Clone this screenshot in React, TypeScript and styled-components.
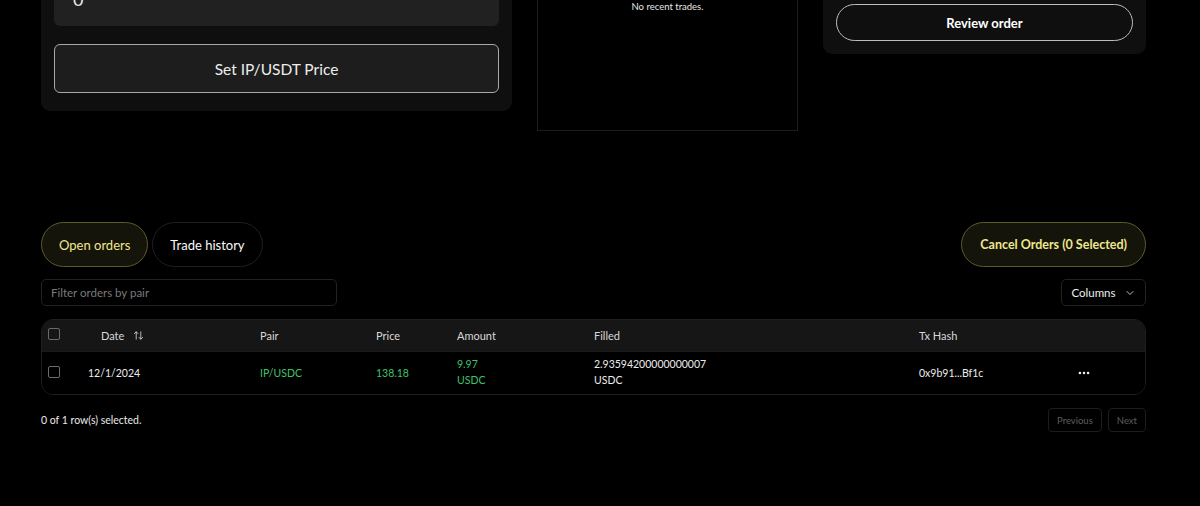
import React from 'react'
import styled, { createGlobalStyle } from 'styled-components'
import { ArrowUpDown, ChevronDown, Ellipsis } from 'lucide-react'

const GlobalStyle = createGlobalStyle`
  html, body {
    margin: 0;
    padding: 0;
    background: #000;
    overflow: hidden;
  }
  body {
    font-family: Lato, "Open Sans", sans-serif;
    color: #f2f2f2;
  }
  * { box-sizing: border-box; }
`

const Page = styled.div`
  width: 1200px;
  height: 506px;
  padding: 0 54px 0 41px;
  overflow: hidden;
`

const TopRow = styled.div`
  display: grid;
  grid-template-columns: 471px 261px 323px;
  column-gap: 25px;
  align-items: start;
  margin-top: -40px;
`

const Card = styled.div<{ $padBottom?: number; $padTop?: number }>`
  background: #0f0f0f;
  border-radius: 9px;
  padding: ${p => p.$padTop ?? 13}px 13px ${p => p.$padBottom ?? 13}px;
  display: flex;
  flex-direction: column;
  gap: 18px;
`

const PriceInput = styled.div`
  height: 53px;
  background: #212121;
  border-radius: 6px;
  padding: 0 19px 16px;
  display: flex;
  align-items: flex-end;
  font-size: 18px;
  color: #e8e8e8;
`

const SetButton = styled.button`
  height: 49px;
  background: #1d1d1d;
  border: 1px solid #a9a9a9;
  border-radius: 6px;
  color: #ededed;
  font-family: inherit;
  font-size: 15.5px;
`

const TradesBox = styled.div`
  height: 171px;
  border: 1px solid #1c1c1c;
  padding-top: 40px;
  text-align: center;
  font-size: 9.5px;
  color: #e6e6e6;
`

const ReviewButton = styled.button`
  height: 37px;
  border-radius: 19px;
  background: #0f0f0f;
  border: 1px solid #bdbdbd;
  color: #fff;
  font-family: inherit;
  font-weight: 700;
  font-size: 13px;
`

const Toolbar = styled.div<{ $top: number; $height: number }>`
  display: flex;
  align-items: center;
  justify-content: space-between;
  margin-top: ${p => p.$top}px;
  height: ${p => p.$height}px;
`

const TabGroup = styled.div`
  display: flex;
  gap: 4px;
  height: 100%;
`

const Pill = styled.button<{ $active?: boolean; $bold?: boolean }>`
  height: 45px;
  padding: 0 ${p => (p.$bold ? 18 : 17)}px;
  border-radius: 23px;
  font-family: inherit;
  font-size: ${p => (p.$bold ? 12.5 : 13)}px;
  font-weight: ${p => (p.$bold ? 700 : 400)};
  background: ${p => (p.$active ? '#15140b' : '#000')};
  border: 1px solid ${p => (p.$active ? '#5d5a2c' : '#1f1f1f')};
  color: ${p => (p.$active ? '#efe78c' : '#fafafa')};
`

const FilterInput = styled.input`
  width: 296px;
  height: 27px;
  background: #000;
  border: 1px solid #222;
  border-radius: 5px;
  padding: 0 9px;
  font-family: inherit;
  font-size: 11.5px;
  color: #ddd;
  &::placeholder { color: #7a7a7a; }
`

const ColumnsButton = styled.button`
  width: 85px;
  height: 27px;
  background: #000;
  border: 1px solid #222;
  border-radius: 5px;
  color: #eee;
  font-family: inherit;
  font-size: 11.5px;
  display: flex;
  align-items: center;
  justify-content: center;
  gap: 8px;
`

const Table = styled.div`
  margin-top: 13px;
  border: 1px solid #1f1f1f;
  border-radius: 12px;
  overflow: hidden;
`

const Row = styled.div<{ $head?: boolean }>`
  display: grid;
  grid-template-columns: 46px 172px 116px 81px 137px 325px 149px 1fr;
  align-items: center;
  height: ${p => (p.$head ? 31 : 43)}px;
  background: ${p => (p.$head ? '#161616' : '#000')};
  border-top: ${p => (p.$head ? 'none' : '1px solid #1a1a1a')};
  font-size: 10.5px;
`

const Cell = styled.div<{ $green?: boolean; $pad?: number }>`
  color: ${p => (p.$green ? '#3fc26c' : '#ececec')};
  line-height: 16px;
  padding-left: ${p => p.$pad ?? 0}px;
  display: flex;
  align-items: center;
  gap: 9px;
`

const HeadCell = styled(Cell)`
  color: #d8d8d8;
  font-size: 11px;
`

const Check = styled.span`
  width: 12px;
  height: 12px;
  border: 1px solid #6a6a6a;
  border-radius: 2px;
  margin-left: 6px;
  margin-top: -3px;
`

const Stack = styled.div`
  display: flex;
  flex-direction: column;
  margin-top: -2px;
`

const Footer = styled.div`
  margin-top: 13px;
  display: flex;
  align-items: center;
  justify-content: space-between;
  font-size: 10.5px;
  color: #eaeaea;
`

const PagerGroup = styled.div`
  display: flex;
  gap: 6px;
`

const PagerButton = styled.button`
  height: 24px;
  padding: 0 8px;
  background: #000;
  border: 1px solid #1c1c1c;
  border-radius: 4px;
  color: #5e5e5e;
  font-family: inherit;
  font-size: 9.5px;
`

export default function App() {
  return (
    <>
      <GlobalStyle />
      <Page>
        <TopRow>
          <Card $padBottom={18}>
            <PriceInput>0</PriceInput>
            <SetButton>Set IP/USDT Price</SetButton>
          </Card>
          <TradesBox>No recent trades.</TradesBox>
          <Card $padTop={44}>
            <ReviewButton>Review order</ReviewButton>
          </Card>
        </TopRow>

        <Toolbar $top={91} $height={45}>
          <TabGroup>
            <Pill $active>Open orders</Pill>
            <Pill>Trade history</Pill>
          </TabGroup>
          <Pill $active $bold>Cancel Orders (0 Selected)</Pill>
        </Toolbar>

        <Toolbar $top={12} $height={27}>
          <FilterInput placeholder="Filter orders by pair" />
          <ColumnsButton>
            Columns <ChevronDown size={12} strokeWidth={1.6} />
          </ColumnsButton>
        </Toolbar>

        <Table>
          <Row $head>
            <HeadCell><Check /></HeadCell>
            <HeadCell $pad={13}>Date <ArrowUpDown size={11} strokeWidth={1.8} /></HeadCell>
            <HeadCell>Pair</HeadCell>
            <HeadCell>Price</HeadCell>
            <HeadCell>Amount</HeadCell>
            <HeadCell>Filled</HeadCell>
            <HeadCell>Tx Hash</HeadCell>
            <HeadCell />
          </Row>
          <Row>
            <Cell><Check /></Cell>
            <Cell>12/1/2024</Cell>
            <Cell $green>IP/USDC</Cell>
            <Cell $green>138.18</Cell>
            <Cell $green>
              <Stack><span>9.97</span><span>USDC</span></Stack>
            </Cell>
            <Cell>
              <Stack><span>2.93594200000000007</span><span>USDC</span></Stack>
            </Cell>
            <Cell>0x9b91...Bf1c</Cell>
            <Cell $pad={9}><Ellipsis size={14} strokeWidth={2.4} /></Cell>
          </Row>
        </Table>

        <Footer>
          <span>0 of 1 row(s) selected.</span>
          <PagerGroup>
            <PagerButton>Previous</PagerButton>
            <PagerButton>Next</PagerButton>
          </PagerGroup>
        </Footer>
      </Page>
    </>
  )
}
